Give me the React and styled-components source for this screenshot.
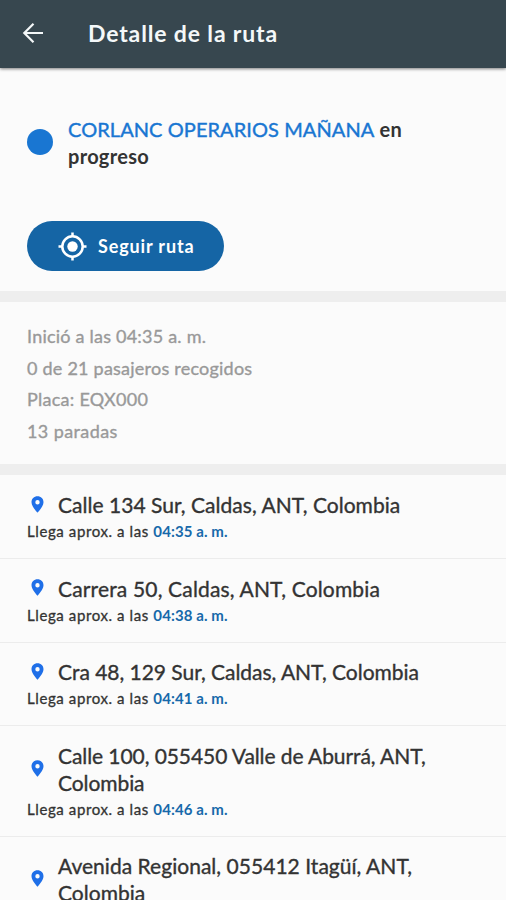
import React from 'react'
import styled, { createGlobalStyle } from 'styled-components'

const GlobalStyle = createGlobalStyle`
    * {
        box-sizing: border-box;
    }
    body {
        margin: 0;
        background: #fbfbfb;
        color: #333;
        font-family: Lato, 'Open Sans', sans-serif;
    }
`

const Screen = styled.div`
    height: 900px;
    overflow: hidden;
`

const Header = styled.header`
    display: flex;
    align-items: center;
    height: 68px;
    padding-left: 22px;
    background: #37474f;
    box-shadow: 0 1px 3px rgba(0, 0, 0, 0.5);
    color: #f4f8f9;

    svg {
        flex: none;
        margin-bottom: 2px;
    }
`

const Title = styled.h1`
    margin: 0 0 3px 44px;
    font-size: 23px;
    font-weight: 700;
    letter-spacing: 0.85px;
    white-space: nowrap;
`

const Status = styled.section`
    height: 223px;
    padding: 48px 27px 0;
`

const StatusRow = styled.div`
    display: flex;
    align-items: center;
`

const Dot = styled.span`
    flex: none;
    width: 26px;
    height: 26px;
    margin: 0 15px 2px 0;
    border-radius: 50%;
    background: #1976d2;
`

const StatusText = styled.p`
    width: 360px;
    margin: 0;
    font-size: 20px;
    font-weight: 700;
    letter-spacing: 0.3px;
    line-height: 27px;
`

const RouteName = styled.span`
    color: #1976d2;
    font-weight: 400;
    letter-spacing: 0.07px;
    -webkit-text-stroke: 0.4px;
`

const FollowButton = styled.button`
    display: flex;
    align-items: center;
    width: 197px;
    height: 50px;
    margin-top: 51px;
    padding: 0 0 0 31px;
    border: none;
    border-radius: 25px;
    background: #1565a5;
    color: #fff;
    font-family: inherit;
    font-size: 18px;
    font-weight: 700;
    letter-spacing: 0.85px;
    white-space: nowrap;

    svg {
        flex: none;
        margin-right: 11px;
    }
`

const Divider = styled.div`
    height: 11px;
    background: #eeeeee;
`

const Info = styled.section`
    height: 162px;
    padding: 19px 27px 0;
    color: #999;
    font-size: 18px;
    line-height: 31.7px;
    -webkit-text-stroke: 0.35px;
`

const InfoLine = styled.div`
    letter-spacing: ${props => props.$spacing || 0}px;
    white-space: nowrap;
`

const Stop = styled.div`
    padding: 16px 27px 14px;
    border-bottom: 1px solid #ececec;
    margin-bottom: -0.5px;
`

const StopName = styled.div`
    display: flex;
    align-items: center;

    svg {
        flex: none;
        margin: 0 14px 1px 4px;
    }
`

const Address = styled.div`
    font-size: 21px;
    line-height: 27px;
    letter-spacing: ${props => props.$spacing || 0}px;
    white-space: pre-line;
    -webkit-text-stroke: 0.35px;
`

const Arrival = styled.div`
    font-size: 15px;
    line-height: 26px;
    letter-spacing: 0.6px;
    -webkit-text-stroke: 0.3px;

    b {
        color: #1769aa;
        font-weight: 700;
        letter-spacing: 0.1px;
        -webkit-text-stroke: 0;
    }
`

const info = [
    { text: 'Inició a las 04:35 a. m.', spacing: 0.22 },
    { text: '0 de 21 pasajeros recogidos', spacing: 0.23 },
    { text: 'Placa: EQX000', spacing: 0.27 },
    { text: '13 paradas', spacing: 0.4 },
]

const stops = [
    { address: 'Calle 134 Sur, Caldas, ANT, Colombia', time: '04:35 a. m.', spacing: 0.03 },
    { address: 'Carrera 50, Caldas, ANT, Colombia', time: '04:38 a. m.', spacing: 0.16 },
    { address: 'Cra 48, 129 Sur, Caldas, ANT, Colombia', time: '04:41 a. m.', spacing: -0.03 },
    { address: 'Calle 100, 055450 Valle de Aburrá, ANT,\nColombia', time: '04:46 a. m.', spacing: -0.08 },
    { address: 'Avenida Regional, 055412 Itagüí, ANT,\nColombia', spacing: 0.03 },
]

function BackIcon() {
    return (
        <svg width="22" height="22" viewBox="0 0 22 22" fill="none" stroke="currentColor" strokeWidth="2.2">
            <path d="M21 11H2.5M11.5 1.8L2.3 11l9.2 9.2" />
        </svg>
    )
}

function TargetIcon() {
    return (
        <svg width="29" height="29" viewBox="0 0 29 29" fill="none" stroke="currentColor" strokeWidth="2.5">
            <circle cx="14.5" cy="14.5" r="10.2" />
            <circle cx="14.5" cy="14.5" r="5.2" fill="currentColor" stroke="none" />
            <path d="M14.5 0.5v4M14.5 24.5v4M0.5 14.5h4M24.5 14.5h4" />
        </svg>
    )
}

function PinIcon() {
    return (
        <svg width="13" height="17" viewBox="0 0 13 17">
            <path
                fill="#1f6fe8"
                fillRule="evenodd"
                d="M6.5 0.3C3 0.3 0.5 2.9 0.5 6.2c0 4.3 6 10.5 6 10.5s6-6.2 6-10.5c0-3.3-2.5-5.9-6-5.9zm0 3.7a2.2 2.2 0 1 1 0 4.4 2.2 2.2 0 0 1 0-4.4z"
            />
        </svg>
    )
}

function App() {
    return (
        <Screen>
            <GlobalStyle />
            <Header>
                <BackIcon />
                <Title>Detalle de la ruta</Title>
            </Header>
            <Status>
                <StatusRow>
                    <Dot />
                    <StatusText>
                        <RouteName>CORLANC OPERARIOS MAÑANA</RouteName> en<br />progreso
                    </StatusText>
                </StatusRow>
                <FollowButton>
                    <TargetIcon />
                    Seguir ruta
                </FollowButton>
            </Status>
            <Divider />
            <Info>
                {info.map(line => (
                    <InfoLine key={line.text} $spacing={line.spacing}>{line.text}</InfoLine>
                ))}
            </Info>
            <Divider />
            {stops.map(stop => (
                <Stop key={stop.address}>
                    <StopName>
                        <PinIcon />
                        <Address $spacing={stop.spacing}>{stop.address}</Address>
                    </StopName>
                    {stop.time && <Arrival>Llega aprox. a las <b>{stop.time}</b></Arrival>}
                </Stop>
            ))}
        </Screen>
    )
}

export default App
